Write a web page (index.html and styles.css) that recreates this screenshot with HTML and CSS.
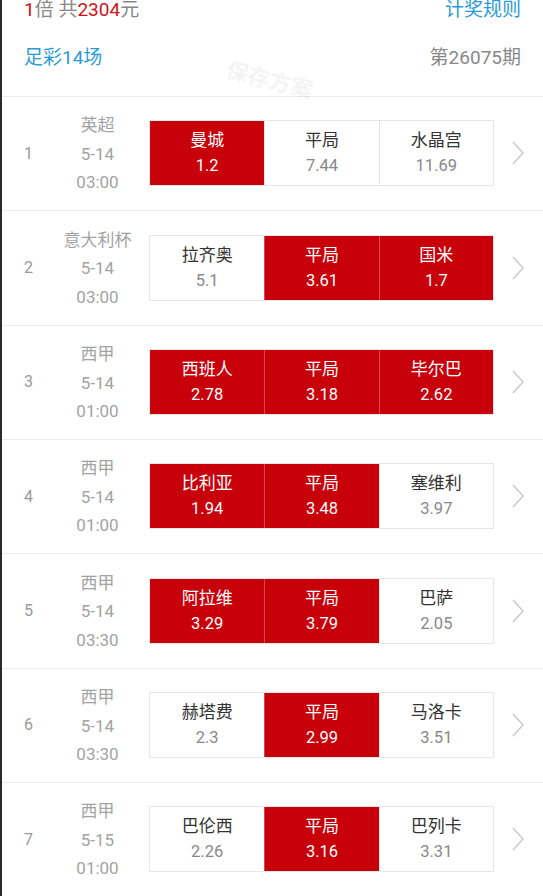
FILE: index.html
```
<!DOCTYPE html>
<html lang="zh-CN">
  <head>
    <meta charset="UTF-8" />
    <meta name="viewport" content="width=device-width, initial-scale=1.0" />
    <title>足彩14场</title>
    <link rel="stylesheet" href="styles.css">
  </head>
  <body>
    <div class="page">
      <div class="top-line">
        <span class="sum"><em>1</em>倍 共<em>2304</em>元</span>
        <span class="link">计奖规则</span>
      </div>
      <div class="title-line">
        <span class="link">足彩14场</span>
        <span class="issue">第26075期</span>
      </div>
      <div class="watermark">保存方案</div>

      <div class="match">
        <div class="no">1</div>
        <div class="info"><span>英超</span><span>5-14</span><span>03:00</span></div>
        <div class="odds">
          <div class="cell on"><span>曼城</span><span>1.2</span></div>
          <div class="cell"><span>平局</span><span>7.44</span></div>
          <div class="cell"><span>水晶宫</span><span>11.69</span></div>
        </div>
        <div class="arrow"><svg width="14" height="26" viewBox="0 0 14 26"><polyline points="2,2 12,13 2,24" /></svg></div>
      </div>

      <div class="match">
        <div class="no">2</div>
        <div class="info"><span>意大利杯</span><span>5-14</span><span>03:00</span></div>
        <div class="odds">
          <div class="cell"><span>拉齐奥</span><span>5.1</span></div>
          <div class="cell on"><span>平局</span><span>3.61</span></div>
          <div class="cell on"><span>国米</span><span>1.7</span></div>
        </div>
        <div class="arrow"><svg width="14" height="26" viewBox="0 0 14 26"><polyline points="2,2 12,13 2,24" /></svg></div>
      </div>

      <div class="match">
        <div class="no">3</div>
        <div class="info"><span>西甲</span><span>5-14</span><span>01:00</span></div>
        <div class="odds">
          <div class="cell on"><span>西班人</span><span>2.78</span></div>
          <div class="cell on"><span>平局</span><span>3.18</span></div>
          <div class="cell on"><span>毕尔巴</span><span>2.62</span></div>
        </div>
        <div class="arrow"><svg width="14" height="26" viewBox="0 0 14 26"><polyline points="2,2 12,13 2,24" /></svg></div>
      </div>

      <div class="match">
        <div class="no">4</div>
        <div class="info"><span>西甲</span><span>5-14</span><span>01:00</span></div>
        <div class="odds">
          <div class="cell on"><span>比利亚</span><span>1.94</span></div>
          <div class="cell on"><span>平局</span><span>3.48</span></div>
          <div class="cell"><span>塞维利</span><span>3.97</span></div>
        </div>
        <div class="arrow"><svg width="14" height="26" viewBox="0 0 14 26"><polyline points="2,2 12,13 2,24" /></svg></div>
      </div>

      <div class="match">
        <div class="no">5</div>
        <div class="info"><span>西甲</span><span>5-14</span><span>03:30</span></div>
        <div class="odds">
          <div class="cell on"><span>阿拉维</span><span>3.29</span></div>
          <div class="cell on"><span>平局</span><span>3.79</span></div>
          <div class="cell"><span>巴萨</span><span>2.05</span></div>
        </div>
        <div class="arrow"><svg width="14" height="26" viewBox="0 0 14 26"><polyline points="2,2 12,13 2,24" /></svg></div>
      </div>

      <div class="match">
        <div class="no">6</div>
        <div class="info"><span>西甲</span><span>5-14</span><span>03:30</span></div>
        <div class="odds">
          <div class="cell"><span>赫塔费</span><span>2.3</span></div>
          <div class="cell on"><span>平局</span><span>2.99</span></div>
          <div class="cell"><span>马洛卡</span><span>3.51</span></div>
        </div>
        <div class="arrow"><svg width="14" height="26" viewBox="0 0 14 26"><polyline points="2,2 12,13 2,24" /></svg></div>
      </div>

      <div class="match">
        <div class="no">7</div>
        <div class="info"><span>西甲</span><span>5-15</span><span>01:00</span></div>
        <div class="odds">
          <div class="cell"><span>巴伦西</span><span>2.26</span></div>
          <div class="cell on"><span>平局</span><span>3.16</span></div>
          <div class="cell"><span>巴列卡</span><span>3.31</span></div>
        </div>
        <div class="arrow"><svg width="14" height="26" viewBox="0 0 14 26"><polyline points="2,2 12,13 2,24" /></svg></div>
      </div>
    </div>
  </body>
</html>
```

FILE: styles.css
```
* {
  box-sizing: border-box;
}

body {
  margin: 0;
  background: #ffffff;
  font-family: Roboto, "Noto Sans CJK SC", sans-serif;
  overflow: hidden;
}

.page {
  position: relative;
  border-left: 2px solid #2a2a2a;
  min-height: 896px;
}

.top-line {
  display: flex;
  justify-content: space-between;
  align-items: center;
  height: 20px;
  padding: 0 22px 0 22px;
  font-size: 19px;
  line-height: 20px;
}

.sum {
  color: #888888;
}

.sum em {
  font-style: normal;
  color: #d0121b;
}

.link {
  color: #2a9bd6;
}

.title-line {
  display: flex;
  justify-content: space-between;
  align-items: center;
  height: 77px;
  padding: 0 22px 6px 22px;
  font-size: 19px;
  border-bottom: 1px solid #ebebeb;
}

.issue {
  color: #888888;
}

.watermark {
  position: absolute;
  left: 224px;
  top: 62px;
  font-size: 22px;
  font-weight: bold;
  color: #000000;
  opacity: 0.04;
  transform: rotate(14deg);
}

.match {
  display: grid;
  grid-template-columns: 48px 99px 345px 1fr;
  align-items: center;
  height: 114.35px;
  padding-bottom: 1px;
  border-bottom: 1px solid #ebebeb;
}

.no {
  padding-left: 22px;
  font-size: 16px;
  color: #999999;
}

.info {
  display: flex;
  flex-direction: column;
  align-items: center;
  padding-right: 4px;
  padding-top: 2px;
  font-size: 17px;
  line-height: 28.5px;
  color: #a3a3a3;
}

.odds {
  display: grid;
  grid-template-columns: 1fr 1fr 1fr;
  height: 66px;
  border: 1px solid #e6e6e6;
}

.cell {
  display: flex;
  flex-direction: column;
  align-items: center;
  justify-content: center;
  border-left: 1px solid #e6e6e6;
  font-size: 17px;
  line-height: 25px;
  color: #333333;
}

.cell:first-child {
  border-left: none;
}

.cell span + span {
  font-size: 16.5px;
  color: #888888;
}

.cell.on {
  background: #c8000a;
  color: #ffffff;
  border-left-color: #d8474d;
}

.cell.on span + span {
  color: #ffffff;
}

.arrow {
  display: flex;
  justify-content: center;
  padding-right: 2px;
}

.arrow polyline {
  fill: none;
  stroke: #cccccc;
  stroke-width: 1.6;
}
```
